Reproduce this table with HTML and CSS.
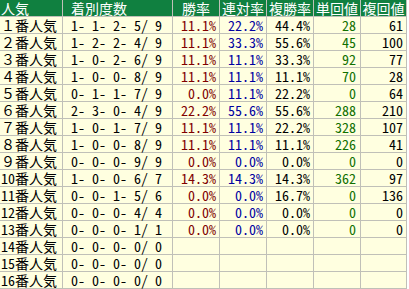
FILE: index.html
```html
<!DOCTYPE html>
<html lang="ja">
<head>
<meta charset="utf-8">
<title>人気別成績</title>
<link rel="stylesheet" href="styles.css">
</head>
<body>
<div class="tbl">
  <div class="h l1">人気</div><div class="h l2">着別度数</div><div class="h">勝率</div><div class="h">連対率</div><div class="h">複勝率</div><div class="h">単回値</div><div class="h">複回値</div>

  <div class="c l1">１番人気</div><div class="c l2">1- 1- 2- 5/ 9</div><div class="c r win">11.1%</div><div class="c r ren">22.2%</div><div class="c r">44.4%</div><div class="c r tan">28</div><div class="c r">61</div>
  <div class="c l1">２番人気</div><div class="c l2">1- 2- 2- 4/ 9</div><div class="c r win">11.1%</div><div class="c r ren">33.3%</div><div class="c r">55.6%</div><div class="c r tan">45</div><div class="c r">100</div>
  <div class="c l1">３番人気</div><div class="c l2">1- 0- 2- 6/ 9</div><div class="c r win">11.1%</div><div class="c r ren">11.1%</div><div class="c r">33.3%</div><div class="c r tan">92</div><div class="c r">77</div>
  <div class="c l1">４番人気</div><div class="c l2">1- 0- 0- 8/ 9</div><div class="c r win">11.1%</div><div class="c r ren">11.1%</div><div class="c r">11.1%</div><div class="c r tan">70</div><div class="c r">28</div>
  <div class="c l1">５番人気</div><div class="c l2">0- 1- 1- 7/ 9</div><div class="c r win">0.0%</div><div class="c r ren">11.1%</div><div class="c r">22.2%</div><div class="c r tan">0</div><div class="c r">64</div>
  <div class="c l1">６番人気</div><div class="c l2">2- 3- 0- 4/ 9</div><div class="c r win">22.2%</div><div class="c r ren">55.6%</div><div class="c r">55.6%</div><div class="c r tan">288</div><div class="c r">210</div>
  <div class="c l1">７番人気</div><div class="c l2">1- 0- 1- 7/ 9</div><div class="c r win">11.1%</div><div class="c r ren">11.1%</div><div class="c r">22.2%</div><div class="c r tan">328</div><div class="c r">107</div>
  <div class="c l1">８番人気</div><div class="c l2">1- 0- 0- 8/ 9</div><div class="c r win">11.1%</div><div class="c r ren">11.1%</div><div class="c r">11.1%</div><div class="c r tan">226</div><div class="c r">41</div>
  <div class="c l1">９番人気</div><div class="c l2">0- 0- 0- 9/ 9</div><div class="c r win">0.0%</div><div class="c r ren">0.0%</div><div class="c r">0.0%</div><div class="c r tan">0</div><div class="c r">0</div>
  <div class="c l1">10番人気</div><div class="c l2">1- 0- 0- 6/ 7</div><div class="c r win">14.3%</div><div class="c r ren">14.3%</div><div class="c r">14.3%</div><div class="c r tan">362</div><div class="c r">97</div>
  <div class="c l1">11番人気</div><div class="c l2">0- 0- 1- 5/ 6</div><div class="c r win">0.0%</div><div class="c r ren">0.0%</div><div class="c r">16.7%</div><div class="c r tan">0</div><div class="c r">136</div>
  <div class="c l1">12番人気</div><div class="c l2">0- 0- 0- 4/ 4</div><div class="c r win">0.0%</div><div class="c r ren">0.0%</div><div class="c r">0.0%</div><div class="c r tan">0</div><div class="c r">0</div>
  <div class="c l1">13番人気</div><div class="c l2">0- 0- 0- 1/ 1</div><div class="c r win">0.0%</div><div class="c r ren">0.0%</div><div class="c r">0.0%</div><div class="c r tan">0</div><div class="c r">0</div>
  <div class="c l1">14番人気</div><div class="c l2">0- 0- 0- 0/ 0</div><div class="c"></div><div class="c"></div><div class="c"></div><div class="c"></div><div class="c"></div>
  <div class="c l1">15番人気</div><div class="c l2">0- 0- 0- 0/ 0</div><div class="c"></div><div class="c"></div><div class="c"></div><div class="c"></div><div class="c"></div>
  <div class="c l1">16番人気</div><div class="c l2">0- 0- 0- 0/ 0</div><div class="c"></div><div class="c"></div><div class="c"></div><div class="c"></div><div class="c"></div>
</div>
</body>
</html>
```

FILE: styles.css
```css
html, body {
  margin: 0;
  padding: 0;
  background: #ffffff;
}

.tbl {
  display: grid;
  grid-template-columns: 62px 109px 46px 46px 46px 46px 45px;
  grid-auto-rows: 16px;
  gap: 1px;
  padding: 0 1px 1px 0;
  width: max-content;
  background: #c0c0b8;
  font-family: "Noto Sans Mono CJK JP", "Noto Sans CJK JP", monospace;
  font-size: 14px;
  line-height: 16px;
}

.h {
  background: #108040;
  color: #ffffff;
  text-align: center;
  white-space: nowrap;
}

.c {
  background: #ffffe0;
  color: #000000;
  white-space: pre;
}

.l1 {
  text-align: left;
  padding-left: 1px;
}

.l2 {
  text-align: left;
  padding-left: 8px;
}

.r {
  text-align: right;
  padding-right: 3px;
}

.win { color: #800000; }
.ren { color: #0000a0; }
.tan { color: #107000; padding-right: 4px; }
```
